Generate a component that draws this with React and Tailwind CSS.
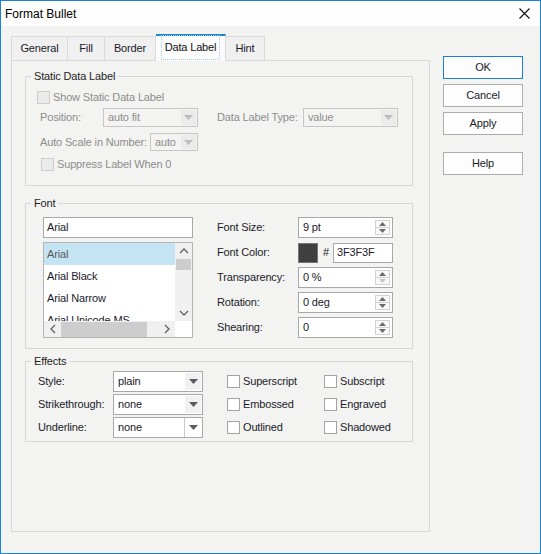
import React from 'react';

const Tri = ({ color }) => (
  <svg width="9" height="5" viewBox="0 0 9 5">
    <path d="M0 0h9L4.5 5z" fill={color} />
  </svg>
);

const Small = ({ up, color }) => (
  <svg width="7" height="4" viewBox="0 0 7 4">
    <path d={up ? 'M0 4h7L3.5 0z' : 'M0 0h7L3.5 4z'} fill={color} />
  </svg>
);

const Chevron = ({ dir }) => {
  const d = {
    up: 'M1 5l4-4 4 4',
    down: 'M1 1l4 4 4-4',
    left: 'M5 1L1 5l4 4',
    right: 'M1 1l4 4-4 4',
  }[dir];
  const horiz = dir === 'left' || dir === 'right';
  return (
    <svg width={horiz ? 6 : 10} height={horiz ? 10 : 6} viewBox={horiz ? '0 0 6 10' : '0 0 10 6'}>
      <path d={d} fill="none" stroke="#606060" strokeWidth="1.3" />
    </svg>
  );
};

function Combo({ value, className, disabled, boxed }) {
  return (
    <div
      className={`flex shrink-0 items-stretch border ${className} ${
        disabled ? 'border-[#c6c6c6] text-[#8d8d8d]' : 'border-[#a8a8a8] bg-white text-[#1b1b2b]'
      }`}
    >
      <span className="flex flex-1 items-center pl-[4px]">{value}</span>
      {disabled && (
        <span className="m-px flex w-[15px] items-center justify-center bg-[#ebebeb]">
          <Tri color="#bdbdbd" />
        </span>
      )}
      {!disabled && !boxed && (
        <span className="m-px flex w-[16px] items-center justify-center bg-[#f1f0f3]">
          <Tri color="#5c5c5c" />
        </span>
      )}
      {boxed && (
        <span className="flex w-[18px] items-center justify-center border-l border-[#c9c9c9] bg-white">
          <Tri color="#5c5c5c" />
        </span>
      )}
    </div>
  );
}

function Spin({ value, downOff }) {
  return (
    <div className="flex h-[21px] w-[95px] items-stretch border border-[#a8a8a8] bg-white">
      <span className="flex flex-1 items-center pl-[4px]">{value}</span>
      <div className="my-[2px] mr-[2px] flex w-[15px] flex-col">
        <div className="flex flex-1 items-center justify-center border border-[#d2d2d2] bg-[#f9f9f9]">
          <Small up color="#6b6b6b" />
        </div>
        <div className="flex flex-1 items-center justify-center border border-t-0 border-[#d2d2d2] bg-[#f9f9f9]">
          <Small color={downOff ? '#c8c8c8' : '#6b6b6b'} />
        </div>
      </div>
    </div>
  );
}

const Check = ({ disabled, className = '' }) => (
  <span
    className={`block h-[13px] w-[13px] shrink-0 border ${className} ${
      disabled ? 'border-[#cdcdcd] bg-[#ebebeb]' : 'border-[#a3a3a3] bg-white'
    }`}
  />
);

function Group({ title, className, children }) {
  return (
    <fieldset className={`ml-[13px] w-[388px] border border-[#d6d6d6] ${className}`}>
      <legend className="ml-[5px] px-[3px] leading-[14px] text-[11px] text-[#1e1e1e]">{title}</legend>
      {children}
    </fieldset>
  );
}

function Button({ label, primary }) {
  return (
    <div
      className={`flex h-[23px] w-[80px] items-center justify-center border bg-[#fdfdfd] text-[#1b1b2b] ${
        primary ? 'border-[#1a7fd4]' : 'border-[#adadad]'
      }`}
    >
      {label}
    </div>
  );
}

const tabs = [
  { label: 'General', w: 'w-[57px] border-l' },
  { label: 'Fill', w: 'w-[37px]' },
  { label: 'Border', w: 'w-[51px]' },
  { label: 'Data Label', w: 'w-[70px]', active: true },
  { label: 'Hint', w: 'w-[39px]' },
];

const fonts = ['Arial', 'Arial Black', 'Arial Narrow', 'Arial Unicode MS'];

export default function App() {
  return (
    <div className="flex h-[554px] w-[541px] flex-col whitespace-nowrap border border-[#1883d7] bg-[#f3f4f1] font-['Liberation_Sans',Arial,sans-serif] text-[11px] tracking-[-0.15px] text-[#1b1b2b]">
      {/* Title bar */}
      <div className="flex h-[25px] shrink-0 items-center justify-between bg-[#fdfefd] pl-[4px] pr-[10px] tracking-normal">
        <span className="text-[12px] text-black">Format Bullet</span>
        <svg width="11" height="11" viewBox="0 0 11 11">
          <path d="M0.5 0.5l10 10M10.5 0.5l-10 10" stroke="#111" strokeWidth="1.1" />
        </svg>
      </div>

      <div className="flex">
        {/* Left: tabs + panel */}
        <div className="ml-[10px] mt-[8px] w-[419px]">
          <div className="flex h-[26px] items-end">
            {tabs.map((t) =>
              t.active ? (
                <div
                  key={t.label}
                  className={`relative z-10 -mb-px flex h-[27px] items-center justify-center border-r border-t-2 border-r-[#d9d9d9] border-t-[#1a86d9] bg-[#fbfcfb] pb-[2px] ${t.w}`}
                >
                  <span className="border border-dotted border-[#a9cbe6] px-[3px] py-[3px] text-[#111]">{t.label}</span>
                </div>
              ) : (
                <div
                  key={t.label}
                  className={`flex h-[24px] items-center justify-center border-r border-t border-[#d9d9d9] bg-[#f0f0f0] ${t.w}`}
                >
                  {t.label}
                </div>
              )
            )}
          </div>

          <div className="h-[472px] border border-[#d9d9d9] bg-[#f3f4f1] pt-[8px]">
            {/* Static Data Label */}
            <Group title="Static Data Label" className="pb-[14px]">
              <div className="mt-[7px] flex h-[14px] items-center pl-[11px] text-[#8d8d8d]">
                <Check disabled />
                <span className="ml-[3px]">Show Static Data Label</span>
              </div>
              <div className="mt-[4px] flex h-[19px] items-center pl-[14px]">
                <span className="w-[63px] shrink-0 text-[#8d8d8d]">Position:</span>
                <Combo value="auto fit" className="h-[19px] w-[95px]" disabled />
                <span className="ml-[19px] w-[86px] shrink-0 text-[#8d8d8d]">Data Label Type:</span>
                <Combo value="value" className="h-[19px] w-[95px]" disabled />
              </div>
              <div className="mt-[6px] flex h-[18px] items-center pl-[14px]">
                <span className="w-[110px] shrink-0 text-[#8d8d8d]">Auto Scale in Number:</span>
                <Combo value="auto" className="h-[18px] w-[48px]" disabled />
              </div>
              <div className="mt-[6px] flex h-[14px] items-center pl-[15px] text-[#8d8d8d]">
                <Check disabled />
                <span className="ml-[3px]">Suppress Label When 0</span>
              </div>
            </Group>

            {/* Font */}
            <Group title="Font" className="mt-[10px] pb-[10px]">
              <div className="mt-[7px] flex pl-[17px]">
                <div className="w-[150px]">
                  <div className="flex h-[21px] items-center border border-[#a8a8a8] bg-white pl-[3px]">Arial</div>
                  <div className="mt-[4px] flex h-[96px] flex-col border border-[#b4b4b4] bg-white">
                    <div className="flex h-[78px]">
                      <div className="flex-1 overflow-hidden">
                        {fonts.map((f, i) => (
                          <div
                            key={f}
                            className={`flex h-[22px] items-center pl-[3px] ${i === 0 ? 'bg-[#c4e3f3] text-[#5a5a5a]' : ''}`}
                          >
                            {f}
                          </div>
                        ))}
                      </div>
                      <div className="flex w-[17px] flex-col items-center bg-[#f0f0f0]">
                        <div className="flex h-[16px] items-center justify-center">
                          <Chevron dir="up" />
                        </div>
                        <div className="h-[11px] w-[15px] bg-[#cdcdcd]" />
                        <div className="flex-1" />
                        <div className="flex h-[16px] items-center justify-center">
                          <Chevron dir="down" />
                        </div>
                      </div>
                    </div>
                    <div className="flex h-[16px]">
                      <div className="flex flex-1 items-center bg-[#f0f0f0]">
                        <div className="flex w-[17px] items-center justify-center">
                          <Chevron dir="left" />
                        </div>
                        <div className="h-[15px] w-[86px] bg-[#cdcdcd]" />
                        <div className="flex-1" />
                        <div className="flex w-[17px] items-center justify-center">
                          <Chevron dir="right" />
                        </div>
                      </div>
                      <div className="w-[17px] bg-white" />
                    </div>
                  </div>
                </div>

                <div className="ml-[24px] flex flex-col gap-[4px]">
                  <div className="flex h-[21px] items-center">
                    <span className="w-[81px]">Font Size:</span>
                    <Spin value="9 pt" />
                  </div>
                  <div className="flex h-[21px] items-center">
                    <span className="w-[81px]">Font Color:</span>
                    <span className="h-[20px] w-[20px] border border-[#767676] bg-[#3f3f3f]" />
                    <span className="w-[15px] pl-[5px]">#</span>
                    <div className="flex h-[20px] w-[60px] items-center border border-[#a8a8a8] bg-white pl-[3px]">3F3F3F</div>
                  </div>
                  <div className="flex h-[21px] items-center">
                    <span className="w-[81px]">Transparency:</span>
                    <Spin value="0 %" downOff />
                  </div>
                  <div className="flex h-[21px] items-center">
                    <span className="w-[81px]">Rotation:</span>
                    <Spin value="0 deg" />
                  </div>
                  <div className="flex h-[21px] items-center">
                    <span className="w-[81px]">Shearing:</span>
                    <Spin value="0" />
                  </div>
                </div>
              </div>
            </Group>

            {/* Effects */}
            <Group title="Effects" className="mt-[5px] pb-[3px]">
              <div className="mt-[3px] flex flex-col gap-[2px] pl-[12px]">
                {[
                  ['Style:', 'plain', false, 'Superscript', 'Subscript'],
                  ['Strikethrough:', 'none', false, 'Embossed', 'Engraved'],
                  ['Underline:', 'none', true, 'Outlined', 'Shadowed'],
                ].map(([label, value, boxed, a, b]) => (
                  <div key={label} className="flex h-[21px] items-center">
                    <span className="w-[75px] shrink-0">{label}</span>
                    <Combo value={value} className="h-[21px] w-[90px]" boxed={boxed} />
                    <Check className="ml-[24px]" />
                    <span className="ml-[3px] w-[81px] shrink-0">{a}</span>
                    <Check />
                    <span className="ml-[3px]">{b}</span>
                  </div>
                ))}
              </div>
            </Group>
          </div>
        </div>

        {/* Right: buttons */}
        <div className="ml-[13px] mt-[30px] flex flex-col gap-[5px]">
          <Button label="OK" primary />
          <Button label="Cancel" />
          <Button label="Apply" />
          <div className="mt-[12px]">
            <Button label="Help" />
          </div>
        </div>
      </div>
    </div>
  );
}
